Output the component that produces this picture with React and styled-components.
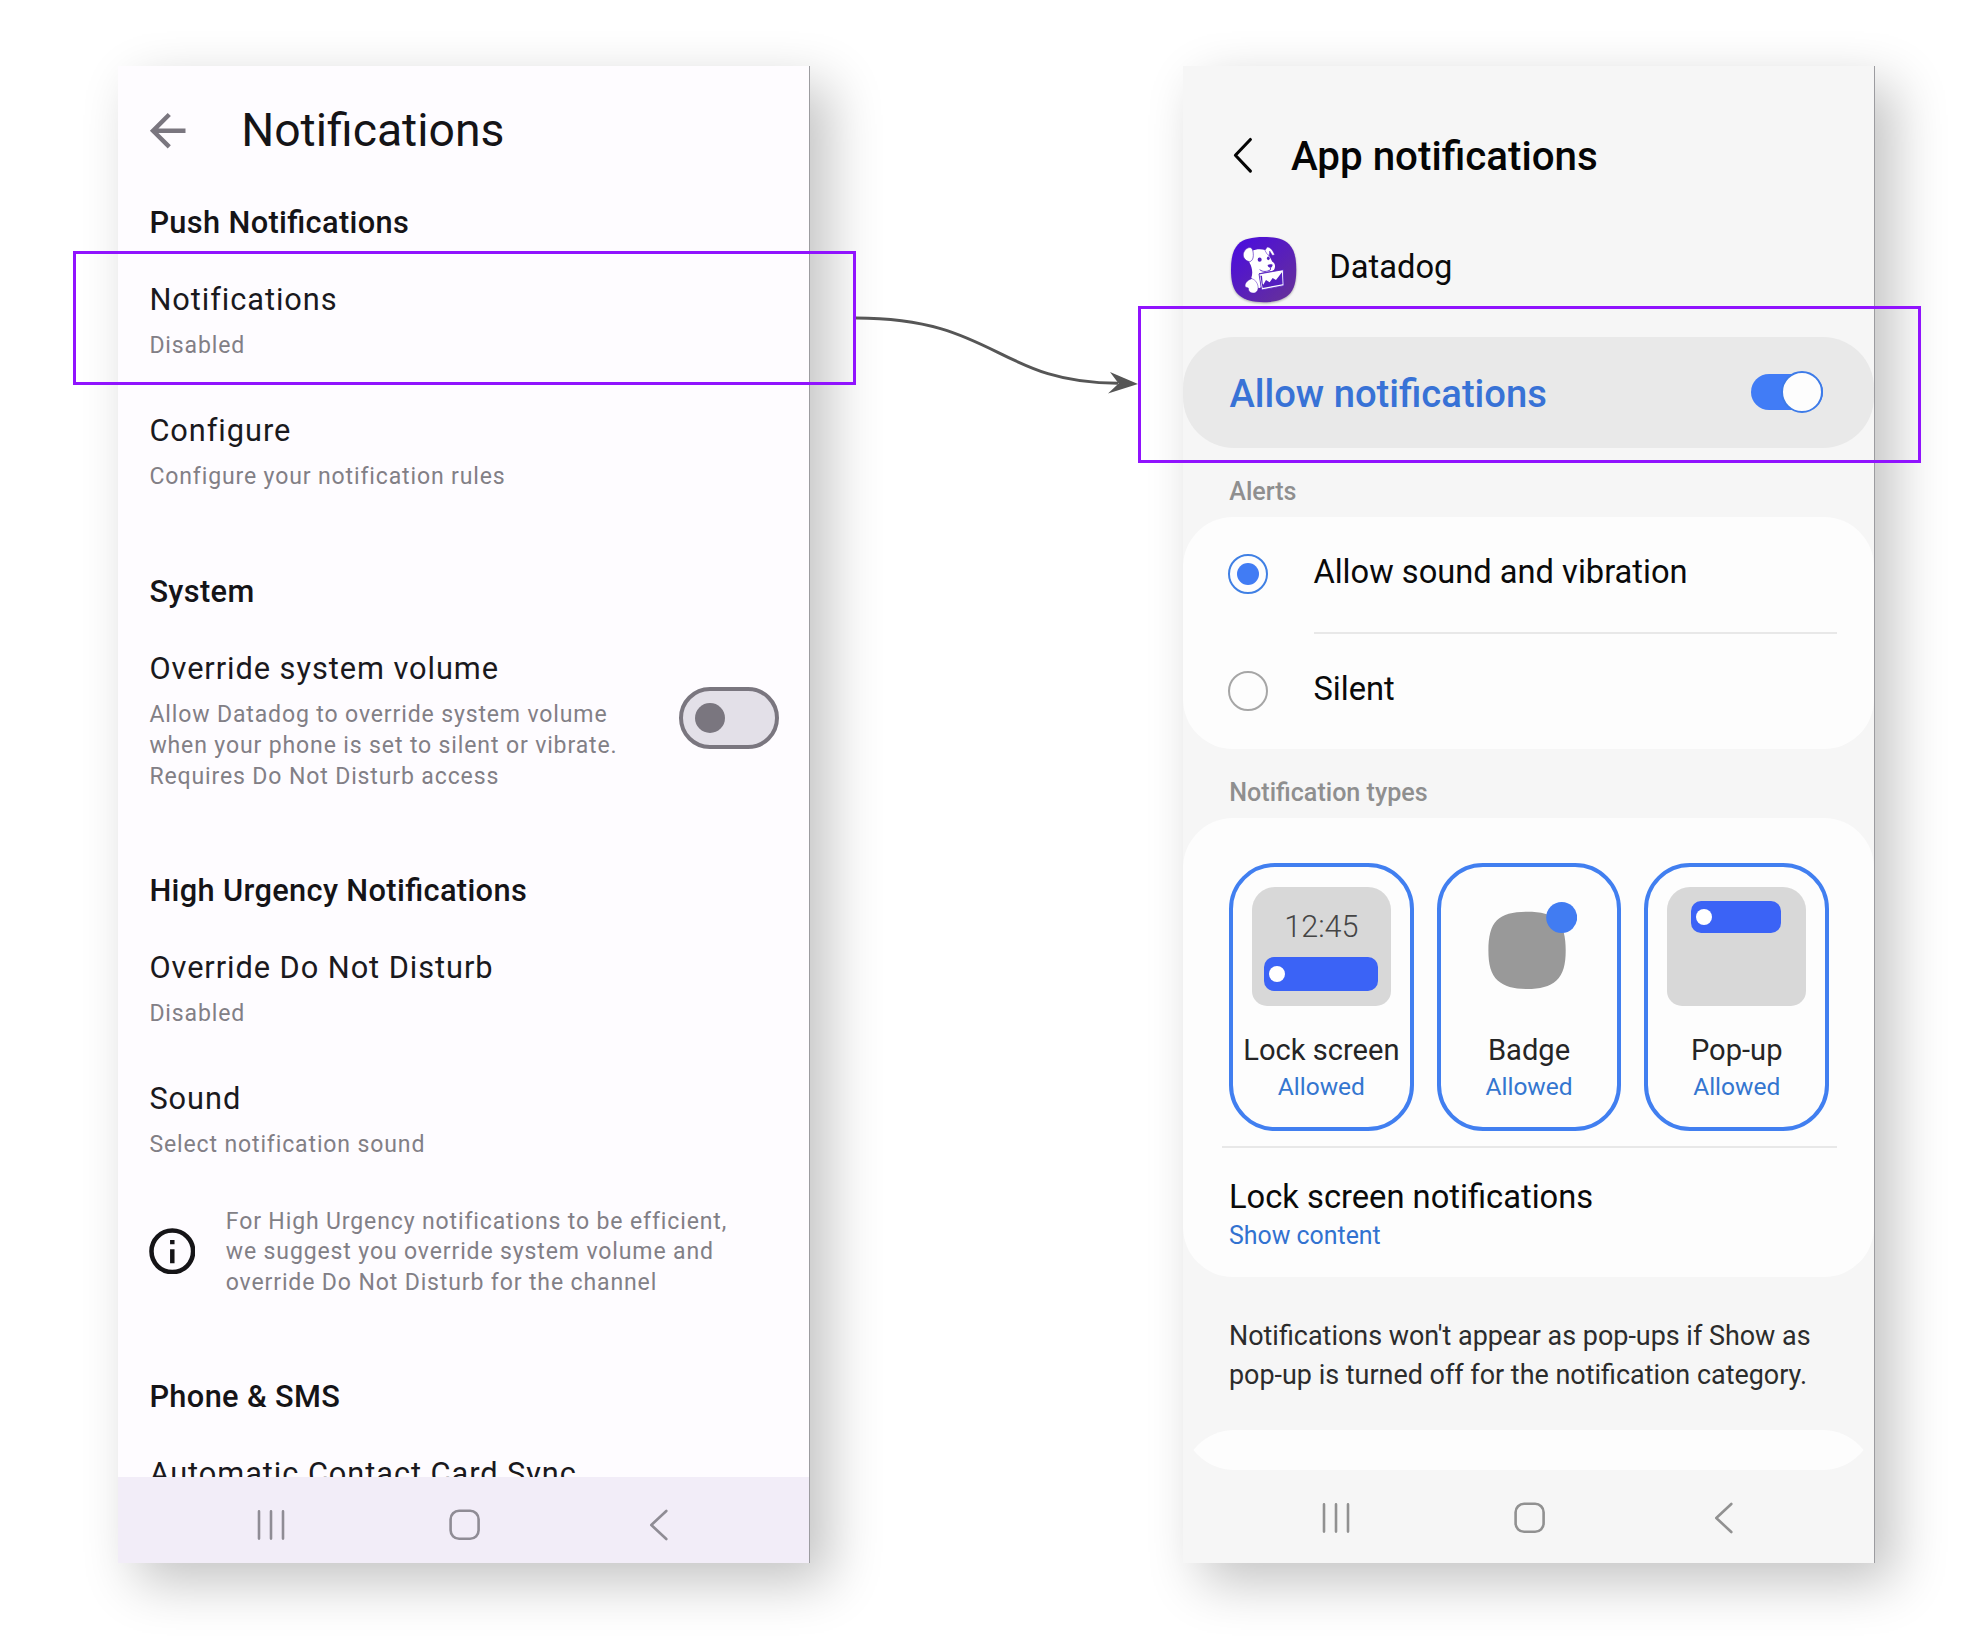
import React from 'react';
import styled, { createGlobalStyle } from 'styled-components';

const GlobalStyle = createGlobalStyle`
  * { box-sizing: border-box; }
  body {
    margin: 0;
    background: #ffffff;
    font-family: Roboto, 'Liberation Sans', sans-serif;
  }
`;

const Stage = styled.main`
  position: relative;
  display: flex;
  justify-content: space-between;
  width: 1986px;
  height: 1644px;
  padding: 66px 111px 0 118px;
  overflow: hidden;
`;

const Phone = styled.section`
  display: flex;
  flex-direction: column;
  width: 692px;
  height: 1497px;
  overflow: hidden;
  background: ${(p) => p.$background};
  border-right: 1px solid #9c9ca0;
  box-shadow: 19px 19px 50px rgba(0, 0, 0, 0.24);
`;

/* ---------- Android navigation bar ---------- */

const NavBar = styled.nav`
  display: grid;
  grid-template-columns: repeat(3, 194px);
  justify-items: center;
  align-items: center;
  flex: none;
  height: ${(p) => p.$height}px;
  margin-top: auto;
  padding: ${(p) => p.$shift}px 0 0 56px;
  background: ${(p) => p.$background};
  color: ${(p) => p.$color};
`;

const LineIcon = styled.svg`
  display: block;
  fill: none;
  stroke: currentColor;
  stroke-width: ${(p) => p.$weight || 2.6};
  stroke-linecap: round;
  stroke-linejoin: round;
`;

function SystemNav(props) {
  return (
    <NavBar {...props}>
      <LineIcon width="32" height="32" viewBox="0 0 32 32">
        <path d="M4 2.4v27.2M16 2.4v27.2M28 2.4v27.2" />
      </LineIcon>
      <LineIcon width="32" height="32" viewBox="0 0 32 32">
        <rect x="1.6" y="1.8" width="28" height="28" rx="8.5" />
      </LineIcon>
      <LineIcon width="32" height="32" viewBox="0 0 32 32">
        <path d="M23.3 2 8.3 16l15 14" />
      </LineIcon>
    </NavBar>
  );
}

/* ---------- Notifications settings ---------- */

const SettingsHeader = styled.header`
  display: flex;
  align-items: center;
  flex: none;
  gap: 46.4px;
  height: 129px;
  padding-left: 23.4px;
  color: #7a767f;
`;

const SettingsTitle = styled.h1`
  margin: 0 0 2px;
  font-size: 46.3px;
  font-weight: 400;
  line-height: 64px;
  color: #151417;
`;

const SettingsBody = styled.div`
  display: flex;
  flex-direction: column;
  flex: none;
  gap: 78.6px;
  height: 1282px;
  padding: 8px 30px 0 31.4px;
  overflow: hidden;
`;

const Group = styled.section`
  display: flex;
  flex-direction: column;
  flex: none;
`;

const GroupHeading = styled.h2`
  margin: 0 0 37px;
  font-size: 30.75px;
  font-weight: 500;
  line-height: 40px;
  letter-spacing: 0.36px;
  font-feature-settings: 'liga' 1;
  color: #151417;
`;

const Items = styled.div`
  display: flex;
  flex-direction: column;
  gap: 48.6px;
`;

const Item = styled.div`
  display: flex;
  align-items: center;
  justify-content: space-between;
`;

const ItemTitle = styled.div`
  margin-bottom: 11.4px;
  font-size: 30.75px;
  line-height: 40px;
  letter-spacing: 0.94px;
  white-space: nowrap;
  color: #1a191d;
`;

const Supporting = styled.p`
  margin: 0;
  font-size: 23.06px;
  line-height: 30.8px;
  letter-spacing: 0.855px;
  white-space: pre-line;
  color: #827f86;
`;

const OffSwitch = styled.span`
  display: flex;
  align-items: center;
  width: 100px;
  height: 61.5px;
  margin-bottom: 5px;
  padding-left: 11.5px;
  border: 4px solid #7a767f;
  border-radius: 31px;
  background: #e3e0e8;
`;

const OffThumb = styled.span`
  width: 30.6px;
  height: 30.6px;
  border-radius: 50%;
  background: #7a767f;
`;

const InfoNote = styled.div`
  display: flex;
  align-items: center;
  gap: 30.4px;
  margin-top: 45.6px;
  color: #151417;
`;

const InfoIcon = styled.svg`
  flex: none;
  margin: 0 0 3px -0.6px;
`;

function Setting({ title, detail, children }) {
  return (
    <Item>
      <div>
        <ItemTitle>{title}</ItemTitle>
        <Supporting>{detail}</Supporting>
      </div>
      {children}
    </Item>
  );
}

function SettingsScreen() {
  return (
    <Phone $background="#fefcff">
      <SettingsHeader>
        <svg width="53.4" height="53.4" viewBox="0 0 24 24" fill="currentColor">
          <path d="M20 11H7.83l5.59-5.59L12 4l-8 8 8 8 1.41-1.41L7.83 13H20v-2z" />
        </svg>
        <SettingsTitle>Notifications</SettingsTitle>
      </SettingsHeader>
      <SettingsBody>
        <Group>
          <GroupHeading>Push Notifications</GroupHeading>
          <Items>
            <Setting title="Notifications" detail="Disabled" />
            <Setting title="Configure" detail="Configure your notification rules" />
          </Items>
        </Group>
        <Group>
          <GroupHeading>System</GroupHeading>
          <Setting
            title="Override system volume"
            detail={
              'Allow Datadog to override system volume\nwhen your phone is set to silent or vibrate.\nRequires Do Not Disturb access'
            }
          >
            <OffSwitch>
              <OffThumb />
            </OffSwitch>
          </Setting>
        </Group>
        <Group>
          <GroupHeading>High Urgency Notifications</GroupHeading>
          <Items>
            <Setting title="Override Do Not Disturb" detail="Disabled" />
            <Setting title="Sound" detail="Select notification sound" />
          </Items>
          <InfoNote>
            <InfoIcon width="46.6" height="46.6" viewBox="0 0 47 47" fill="none" stroke="currentColor">
              <circle cx="23.5" cy="23.5" r="21" strokeWidth="4.6" />
              <path d="M23.5 21.4v14.2M23.5 12v4.4" strokeWidth="4.5" />
            </InfoIcon>
            <Supporting>
              {
                'For High Urgency notifications to be efficient,\nwe suggest you override system volume and\noverride Do Not Disturb for the channel'
              }
            </Supporting>
          </InfoNote>
        </Group>
        <Group>
          <GroupHeading>Phone &amp; SMS</GroupHeading>
          <Setting title="Automatic Contact Card Sync" />
        </Group>
      </SettingsBody>
      <SystemNav $height={86} $shift={9} $background="#f2edf8" $color="#8f8c95" />
    </Phone>
  );
}

/* ---------- App notifications ---------- */

const AppHeader = styled.header`
  display: flex;
  align-items: center;
  flex: none;
  gap: 37.2px;
  height: 80px;
  margin-top: 50px;
  padding-left: 48.8px;
  color: #050505;
`;

const BackChevron = styled(LineIcon)`
  margin-bottom: 1px;
`;

const AppTitle = styled.h1`
  margin: 1px 0 0;
  font-size: 40.3px;
  font-weight: 500;
  line-height: 60px;
`;

const AppRow = styled.div`
  display: flex;
  align-items: center;
  flex: none;
  gap: 33px;
  height: 66px;
  margin-top: 40.6px;
  padding-left: 48px;
`;

const AppIcon = styled.svg`
  flex: none;
  margin-top: 1px;
  overflow: visible;
  filter: drop-shadow(0 1px 1px rgba(0, 0, 0, 0.3));
`;

const AppName = styled.div`
  padding-bottom: 6px;
  font-size: 32.7px;
  line-height: 40px;
  color: #0a0a0a;
`;

const AllowBar = styled.div`
  display: flex;
  align-items: center;
  justify-content: space-between;
  flex: none;
  height: 111px;
  margin-top: 34px;
  padding: 0 51px 0 46.4px;
  border-radius: 51px;
  background: #e9e9e9;
`;

const AllowLabel = styled.div`
  padding-top: 3px;
  font-size: 38.2px;
  font-weight: 500;
  line-height: 50px;
  color: #3872d6;
`;

const OnSwitch = styled.span`
  display: flex;
  align-items: center;
  justify-content: flex-end;
  width: 72px;
  height: 36px;
  border-radius: 18px;
  background: #417cf6;
`;

const OnThumb = styled.span`
  flex: none;
  width: 42px;
  height: 42px;
  border: 2px solid #3d7be8;
  border-radius: 50%;
  background: #fdfdfd;
`;

const SectionLabel = styled.h2`
  flex: none;
  margin: 29.6px 0 9.6px 46.3px;
  font-size: 25.1px;
  font-weight: 500;
  line-height: 30px;
  color: #8f8f8f;
`;

const Card = styled.section`
  flex: none;
  border-radius: 50px;
  background: #fdfdfd;
`;

const Choice = styled.div`
  display: flex;
  align-items: center;
  gap: 45.4px;
  height: 115px;
  padding-left: 45px;
`;

const ChoiceLabel = styled.div`
  padding-bottom: 4px;
  font-size: 32.65px;
  line-height: 40px;
  color: #0a0a0a;
`;

const Radio = styled.span`
  display: grid;
  place-items: center;
  width: 40px;
  height: 40px;
  border: 2px solid ${(p) => (p.$checked ? '#4080e4' : '#a6a6a6')};
  border-radius: 50%;
`;

const RadioDot = styled.span`
  width: 22px;
  height: 22px;
  border-radius: 50%;
  background: #417cf4;
`;

const Divider = styled.hr`
  height: 2px;
  margin: ${(p) => p.$gap || 0}px 37.5px 0 ${(p) => p.$inset}px;
  border: 0;
  background: #e8e8e8;
`;

const Tiles = styled.div`
  display: flex;
  gap: 23px;
  padding: 45px 0 0 46px;
`;

const Tile = styled.div`
  display: flex;
  flex-direction: column;
  align-items: center;
  width: 184.7px;
  height: 267.7px;
  padding-top: 20px;
  border: 4px solid #417ff0;
  border-radius: 46px;
`;

const Preview = styled.div`
  display: flex;
  flex-direction: column;
  align-items: center;
  width: 138.6px;
  height: 119px;
  margin-bottom: 27.2px;
  padding-top: ${(p) => p.$top || 0}px;
  border-radius: 23px 23px 15px 15px;
  background: ${(p) => (p.$plain ? 'none' : '#d8d8d8')};
`;

const Clock = styled.div`
  margin-bottom: 12.2px;
  font-size: 30.6px;
  font-weight: 300;
  line-height: 36px;
  color: #454545;
`;

const Banner = styled.div`
  display: flex;
  align-items: center;
  width: ${(p) => p.$width}px;
  height: ${(p) => p.$height}px;
  margin-right: 1px;
  padding-left: 5.2px;
  border-radius: 10px;
  background: #3b63f6;
`;

const BannerDot = styled.span`
  width: 16px;
  height: 16px;
  border-radius: 50%;
  background: #ffffff;
`;

const TileName = styled.div`
  margin-bottom: 4.6px;
  font-size: 29.1px;
  line-height: 34px;
  white-space: nowrap;
  color: #252525;
`;

const TileState = styled.div`
  font-size: 24.5px;
  line-height: 30px;
  color: #3476d0;
`;

const LockSetting = styled.div`
  padding: 29.8px 0 26px 46px;
`;

const LockTitle = styled.div`
  margin-bottom: 4.8px;
  font-size: 32.7px;
  line-height: 38px;
  color: #0a0a0a;
`;

const LockValue = styled.div`
  font-size: 24.9px;
  line-height: 30px;
  color: #3272d0;
`;

const FootNote = styled.p`
  flex: none;
  margin: 40px 0 0 46px;
  font-size: 26.93px;
  line-height: 39.2px;
  white-space: pre-line;
  color: #2c2c2c;
`;

const NextCard = styled.div`
  flex: none;
  margin-top: 34.6px;
`;

const CardSlice = styled.div`
  display: flex;
  align-items: ${(p) => (p.$end ? 'flex-end' : 'flex-start')};
  height: 20px;
  overflow: hidden;

  &::before {
    content: '';
    flex: 1 0 auto;
    height: 110px;
    border-radius: 51px;
    background: #fdfdfd;
  }
`;

const SOFT_SQUARE =
  'M50 0C68 0 81 3 89 11C97 19 100 32 100 50C100 68 97 80 88 89C79 97 67 100 50 100C33 100 21 97 12 89C3 80 0 68 0 50C0 32 3 19 11 11C19 3 32 0 50 0Z';

function DatadogIcon() {
  const purple = '#541fc0';
  return (
    <AppIcon width="65.3" height="65.3" viewBox="22 20 196 196">
      <defs>
        <linearGradient id="dog-bg" x1="0.1" y1="0.1" x2="0.9" y2="0.95">
          <stop offset="0" stopColor="#4c0edb" />
          <stop offset="1" stopColor="#65309a" />
        </linearGradient>
      </defs>
      <path d={SOFT_SQUARE} fill="url(#dog-bg)" transform="translate(22 20) scale(1.96)" />
      {/* head, neck and chest */}
      <path
        d="M84 62C96 56 112 55 124 59L130 70C138 77 142 86 146 94C152 97 155 103 154 109C154 116 150 121 144 122L106 129L112 170C108 176 103 173 99 166L83 142C88 130 86 112 78 98C72 84 74 70 84 62Z"
        fill="#fff"
      />
      {/* left ear */}
      <path
        d="M82 52C72 50 62 58 59 70C57 82 66 92 77 94C84 94 89 86 89 76C89 66 88 56 82 52Z"
        fill="#fff"
        stroke={purple}
        strokeWidth="2"
      />
      {/* right ear */}
      <path
        d="M124 60L131 50C140 51 148 60 153 74L146 75L138 62L137 76C131 73 127 67 124 60Z"
        fill="#fff"
        stroke={purple}
        strokeWidth="1.4"
      />
      {/* haunch */}
      <path
        d="M84 145C70 150 62 160 65 170L74 173C74 184 82 190 92 188C101 186 105 177 103 167C101 157 94 147 84 145Z"
        fill="#fff"
        stroke={purple}
        strokeWidth="1.5"
      />
      {/* eyes, nose and mouth */}
      <ellipse cx="108" cy="88" rx="6" ry="6.5" fill={purple} />
      <ellipse cx="134" cy="84" rx="4.2" ry="5.5" fill={purple} />
      <path d="M132 104C136 101 143 101 147 103C147 108 143 113 139 112C135 111 132 108 132 104Z" fill={purple} />
      <path d="M108 118C118 126 130 124 140 119L141 112" fill="none" stroke={purple} strokeWidth="2.6" />
      {/* chart held in the mouth */}
      <path d="M106 131L179 118L181 166L114 179Z" fill="#fff" stroke={purple} strokeWidth="2.5" />
      <path d="M117 173L112 150L119 163L127 149L138 156L147 143L157 149L175 126L177 162Z" fill={purple} />
      <path d="M110 136L113 152L117 160L115 136Z" fill={purple} />
    </AppIcon>
  );
}

const types = [
  {
    name: 'Lock screen',
    preview: (
      <Preview $top={22.3}>
        <Clock>12:45</Clock>
        <Banner $width={114} $height={33.7}>
          <BannerDot />
        </Banner>
      </Preview>
    ),
  },
  {
    name: 'Badge',
    preview: (
      <Preview $plain $top={14.8}>
        <svg width="96" height="90" viewBox="0 0 96 90">
          <g transform="translate(7.4 9.8) scale(0.773)">
            <path d={SOFT_SQUARE} fill="#999999" />
          </g>
          <circle cx="80.7" cy="15.5" r="15.5" fill="#417cf2" />
        </svg>
      </Preview>
    ),
  },
  {
    name: 'Pop-up',
    preview: (
      <Preview $top={14.2}>
        <Banner $width={90} $height={31.7}>
          <BannerDot />
        </Banner>
      </Preview>
    ),
  },
];

function AppNotificationsScreen() {
  return (
    <Phone $background="#f6f6f6">
      <AppHeader>
        <BackChevron $weight={3.1} width="22" height="38" viewBox="0 0 22 38">
          <path d="M18.4 2.5 3.4 18.3l15 15.8" />
        </BackChevron>
        <AppTitle>App notifications</AppTitle>
      </AppHeader>
      <AppRow>
        <DatadogIcon />
        <AppName>Datadog</AppName>
      </AppRow>
      <AllowBar>
        <AllowLabel>Allow notifications</AllowLabel>
        <OnSwitch>
          <OnThumb />
        </OnSwitch>
      </AllowBar>
      <SectionLabel>Alerts</SectionLabel>
      <Card>
        <Choice>
          <Radio $checked>
            <RadioDot />
          </Radio>
          <ChoiceLabel>Allow sound and vibration</ChoiceLabel>
        </Choice>
        <Divider $inset={131} />
        <Choice>
          <Radio />
          <ChoiceLabel>Silent</ChoiceLabel>
        </Choice>
      </Card>
      <SectionLabel>Notification types</SectionLabel>
      <Card>
        <Tiles>
          {types.map((type) => (
            <Tile key={type.name}>
              {type.preview}
              <TileName>{type.name}</TileName>
              <TileState>Allowed</TileState>
            </Tile>
          ))}
        </Tiles>
        <Divider $gap={15.3} $inset={38.5} />
        <LockSetting>
          <LockTitle>Lock screen notifications</LockTitle>
          <LockValue>Show content</LockValue>
        </LockSetting>
      </Card>
      <FootNote>
        {
          "Notifications won't appear as pop-ups if Show as\npop-up is turned off for the notification category."
        }
      </FootNote>
      <NextCard>
        <CardSlice />
        <CardSlice $end />
      </NextCard>
      <SystemNav $height={90} $shift={0} $background="#f6f6f6" $color="#919191" />
    </Phone>
  );
}

/* ---------- Annotations over both screens ---------- */

const Highlight = styled.div`
  position: absolute;
  left: ${(p) => p.$x}px;
  top: ${(p) => p.$y}px;
  width: ${(p) => p.$w}px;
  height: ${(p) => p.$h}px;
  border: 3px solid #9013fe;
`;

const Connector = styled.svg`
  position: absolute;
  left: 856px;
  top: 300px;
`;

export default function App() {
  return (
    <>
      <GlobalStyle />
      <Stage>
        <SettingsScreen />
        <AppNotificationsScreen />
        <Highlight $x={73} $y={251} $w={783} $h={134} />
        <Highlight $x={1138} $y={306} $w={783} $h={157} />
        <Connector width="284" height="100" viewBox="0 0 284 100">
          <path
            d="M0 18C140 18 141 83 262 83.3"
            fill="none"
            stroke="#565656"
            strokeWidth="3"
          />
          <path d="M282 84 254 72l8.6 11.4L252 93.4Z" fill="#565656" />
        </Connector>
      </Stage>
    </>
  );
}
